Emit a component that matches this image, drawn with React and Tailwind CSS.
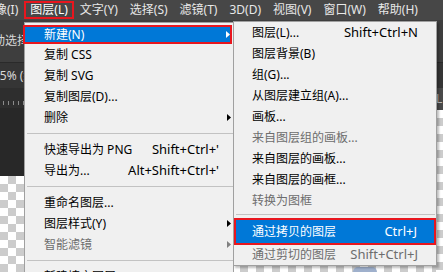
import React from "react";

const Arrow = ({ color = "#000000" }) => (
  <svg width="4" height="7" viewBox="0 0 4 7" className="block">
    <path d="M0 0L4 3.5L0 7Z" fill={color} />
  </svg>
);

const barItems = ["图像(I)", "图层(L)", "文字(Y)", "选择(S)", "滤镜(T)", "3D(D)", "视图(V)", "窗口(W)", "帮助(H)"];

const mainItems = [
  { label: "新建(N)", arrow: true, active: true },
  { label: "复制 CSS" },
  { label: "复制 SVG" },
  { label: "复制图层(D)..." },
  { label: "删除", arrow: true },
  "sep",
  { label: "快速导出为 PNG", sc: "Shift+Ctrl+'" },
  { label: "导出为...", sc: "Alt+Shift+Ctrl+'" },
  "sep",
  { label: "重命名图层..." },
  { label: "图层样式(Y)", arrow: true },
  { label: "智能滤镜", arrow: true, disabled: true },
  "sep",
  { label: "新建填充图层(W)", arrow: true },
  { label: "新建调整图层(J)", arrow: true },
];

const subItems = [
  { label: "图层(L)...", sc: "Shift+Ctrl+N" },
  { label: "图层背景(B)" },
  { label: "组(G)..." },
  { label: "从图层建立组(A)..." },
  { label: "画板..." },
  { label: "来自图层组的画板...", disabled: true },
  { label: "来自图层的画板..." },
  { label: "来自图层的画框..." },
  { label: "转换为图框", disabled: true },
];

const checker =
  "bg-[image:conic-gradient(#cccccc_25%,#ffffff_0_50%,#cccccc_0_75%,#ffffff_0)] bg-[length:16px_16px]";

function MenuBar() {
  return (
    <div className="flex h-[20px] items-center bg-[#474747] text-[#e8e8e8]">
      {barItems.map((t, i) => (
        <div
          key={t}
          className={
            "flex h-[18px] shrink-0 items-center whitespace-nowrap border-2 px-[4px] " +
            (i === 1 ? "border-[#e8161e] text-white " : "border-transparent ") +
            (i === 0 ? "-ml-[23px]" : "")
          }
        >
          {t}
        </div>
      ))}
    </div>
  );
}

function MainMenu() {
  return (
    <div className="absolute left-[24px] top-[22px] w-[210px] border border-[#a0a0a0] bg-[#f0f0f0] text-black">
      {mainItems.map((it, i) => {
        if (it === "sep")
          return (
            <div key={i} className="flex h-[11px] items-center pl-[2px]">
              <div className="h-px w-full bg-[#c2c2c2]" />
            </div>
          );
        if (it.active)
          return (
            <div
              key={i}
              className="-ml-[2px] mt-[2px] flex h-[19px] w-[209px] items-center border-2 border-[#e8161e] bg-[#0078d7] pl-[19px] text-white"
            >
              <span className="flex-1 whitespace-nowrap">{it.label}</span>
              <span className="flex w-[12px] justify-end">
                <Arrow color="#ffffff" />
              </span>
            </div>
          );
        return (
          <div
            key={i}
            className={
              "flex h-[21px] items-center pl-[19px] pr-[2px] " +
              (it.disabled ? "text-[#6d6d6d]" : "")
            }
          >
            <span className="flex-1 whitespace-nowrap">{it.label}</span>
            {it.sc && <span className="whitespace-nowrap text-[13px]">{it.sc}</span>}
            <span className="flex w-[12px] justify-end">
              {it.arrow && <Arrow color={it.disabled ? "#808080" : "#000000"} />}
            </span>
          </div>
        );
      })}
    </div>
  );
}

function SubMenu() {
  return (
    <div className="absolute left-[233px] top-[21px] w-[204px] border border-[#a0a0a0] bg-[#f0f0f0] text-black shadow-[2px_2px_2px_rgba(0,0,0,0.25)]">
      {subItems.map((it, i) => (
        <div
          key={i}
          className={
            "flex h-[21px] items-center pl-[18px] pr-[18px] " +
            (it.disabled ? "text-[#6d6d6d]" : "")
          }
        >
          <span className="flex-1 whitespace-nowrap">{it.label}</span>
          {it.sc && <span className="whitespace-nowrap text-[13px]">{it.sc}</span>}
        </div>
      ))}
      <div className="flex h-[7px] items-center pl-[2px] pr-[1px]">
        <div className="h-px w-full bg-[#c2c2c2]" />
      </div>
      <div className="flex h-[27px] w-[202px] items-center border-2 border-[#e8161e] bg-[#0078d7] pl-[16px] pr-[17px] text-white">
        <span className="flex-1 whitespace-nowrap">通过拷贝的图层</span>
        <span className="whitespace-nowrap text-[13px]">Ctrl+J</span>
      </div>
      <div className="flex h-[20px] items-center pl-[18px] pr-[18px] text-[#6d6d6d]">
        <span className="flex-1 whitespace-nowrap">通过剪切的图层</span>
        <span className="whitespace-nowrap text-[13px]">Shift+Ctrl+J</span>
      </div>
    </div>
  );
}

export default function App() {
  return (
    <div className="relative h-[272px] w-[443px] overflow-hidden bg-[#2b2b2b] text-[12px] font-[family-name:'Noto_Sans','Noto_Sans_CJK_SC',sans-serif]">
      <MenuBar />
      <div className="flex h-[43px] items-center border-b border-[#2a2a2a] bg-[#3e3e3e] text-[#d8d8d8]">
        <span className="-ml-[19px] whitespace-nowrap">自动选择：图层</span>
      </div>
      <div className="flex h-[25px] items-center bg-[#353535] text-[#d8d8d8]">
        <span className="-ml-[7px] whitespace-nowrap">25% (绿色, RGB/8)</span>
      </div>
      <div className="flex h-[184px]">
        <div className="flex flex-1 flex-col">
          <div className="flex h-[20px] items-end bg-[#2e2e2e] pb-[3px]">
            <div className="h-[4px] w-full bg-[image:repeating-linear-gradient(90deg,transparent_0_3px,#8a8a8a_3px_4px,transparent_4px_5px)]" />
          </div>
          <div className="h-[68px] bg-[#282828]" />
          <div className={"flex flex-1 items-end pl-[353px] " + checker}>
            <div className="h-[5px] w-[24px] rounded-t-full bg-[#9fb0cc]" />
          </div>
        </div>
        <div className="flex w-[7px] flex-col">
          <div className="flex h-[22px] items-center bg-[#4a4a4a] text-[#bdbdbd]">L</div>
          <div className={"flex-1 " + checker} />
        </div>
      </div>
      <MainMenu />
      <SubMenu />
    </div>
  );
}
